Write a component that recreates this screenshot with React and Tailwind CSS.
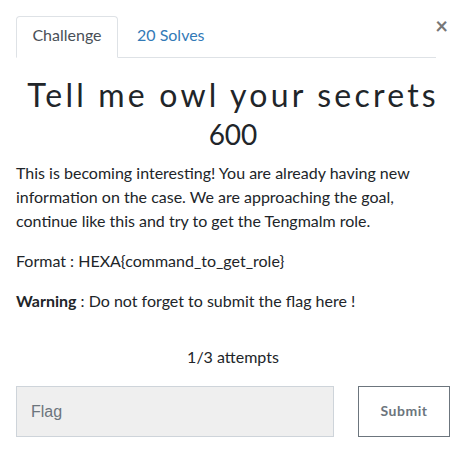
import React, { useState } from 'react';

const App = () => {
  const [flag, setFlag] = useState('');

  return (
    <div className="w-[466px] h-[469px] bg-white font-['Lato',sans-serif] text-[#212529] relative">
      <button
        type="button"
        className="absolute right-[18px] top-[15px] text-[22px] leading-none font-bold text-[#777]"
      >
        ×
      </button>

      <div className="pt-4 px-4 pr-[30px]">
        <div className="flex border-b border-[#dee2e6] h-[42px]">
          <div className="w-[102px] -mb-px border border-[#dee2e6] border-b-white rounded-t bg-white flex items-center justify-center pb-[4px] text-[16px] text-[#495057]">
            Challenge
          </div>
          <div className="px-[19px] pb-[4px] flex items-center text-[16px] text-[#337ab7]">
            20 Solves
          </div>
        </div>
      </div>

      <div className="px-4">
        <h2 className="mt-[17px] text-center text-[32px] leading-[40px] tracking-[3.2px] font-normal text-[#212529]">
          Tell me owl your secrets
        </h2>
        <h3 className="text-center text-[28px] leading-[34px] mt-[2px]">600</h3>

        <div className="mt-[10px] text-[16px] leading-[24px] pr-2">
          <p>
            This is becoming interesting! You are already having new information on the case. We are approaching the goal, continue like this and try to get the Tengmalm role.
          </p>
          <p className="mt-4">Format : HEXA{'{'}command_to_get_role{'}'}</p>
          <p className="mt-4">
            <strong className="font-bold">Warning</strong> : Do not forget to submit the flag here !
          </p>
        </div>

        <div className="mt-[32px] text-center text-[16px] leading-[24px]">1/3 attempts</div>

        <div className="mt-[17px] flex items-start">
          <input
            type="text"
            value={flag}
            onChange={(e) => setFlag(e.target.value)}
            placeholder="Flag"
            className="w-[318px] h-[51px] bg-[#efefef] border border-[#ced4da] px-[14px] text-[16px] font-['Liberation_Sans',sans-serif] placeholder:text-[#6c757d] outline-none"
          />
          <button
            type="button"
            className="ml-[24px] w-[92px] h-[51px] border border-[#6c757d] pb-[2px] text-[14px] font-bold tracking-[0.5px] text-[#6c757d] bg-white"
          >
            Submit
          </button>
        </div>
      </div>
    </div>
  );
};

export default App;
